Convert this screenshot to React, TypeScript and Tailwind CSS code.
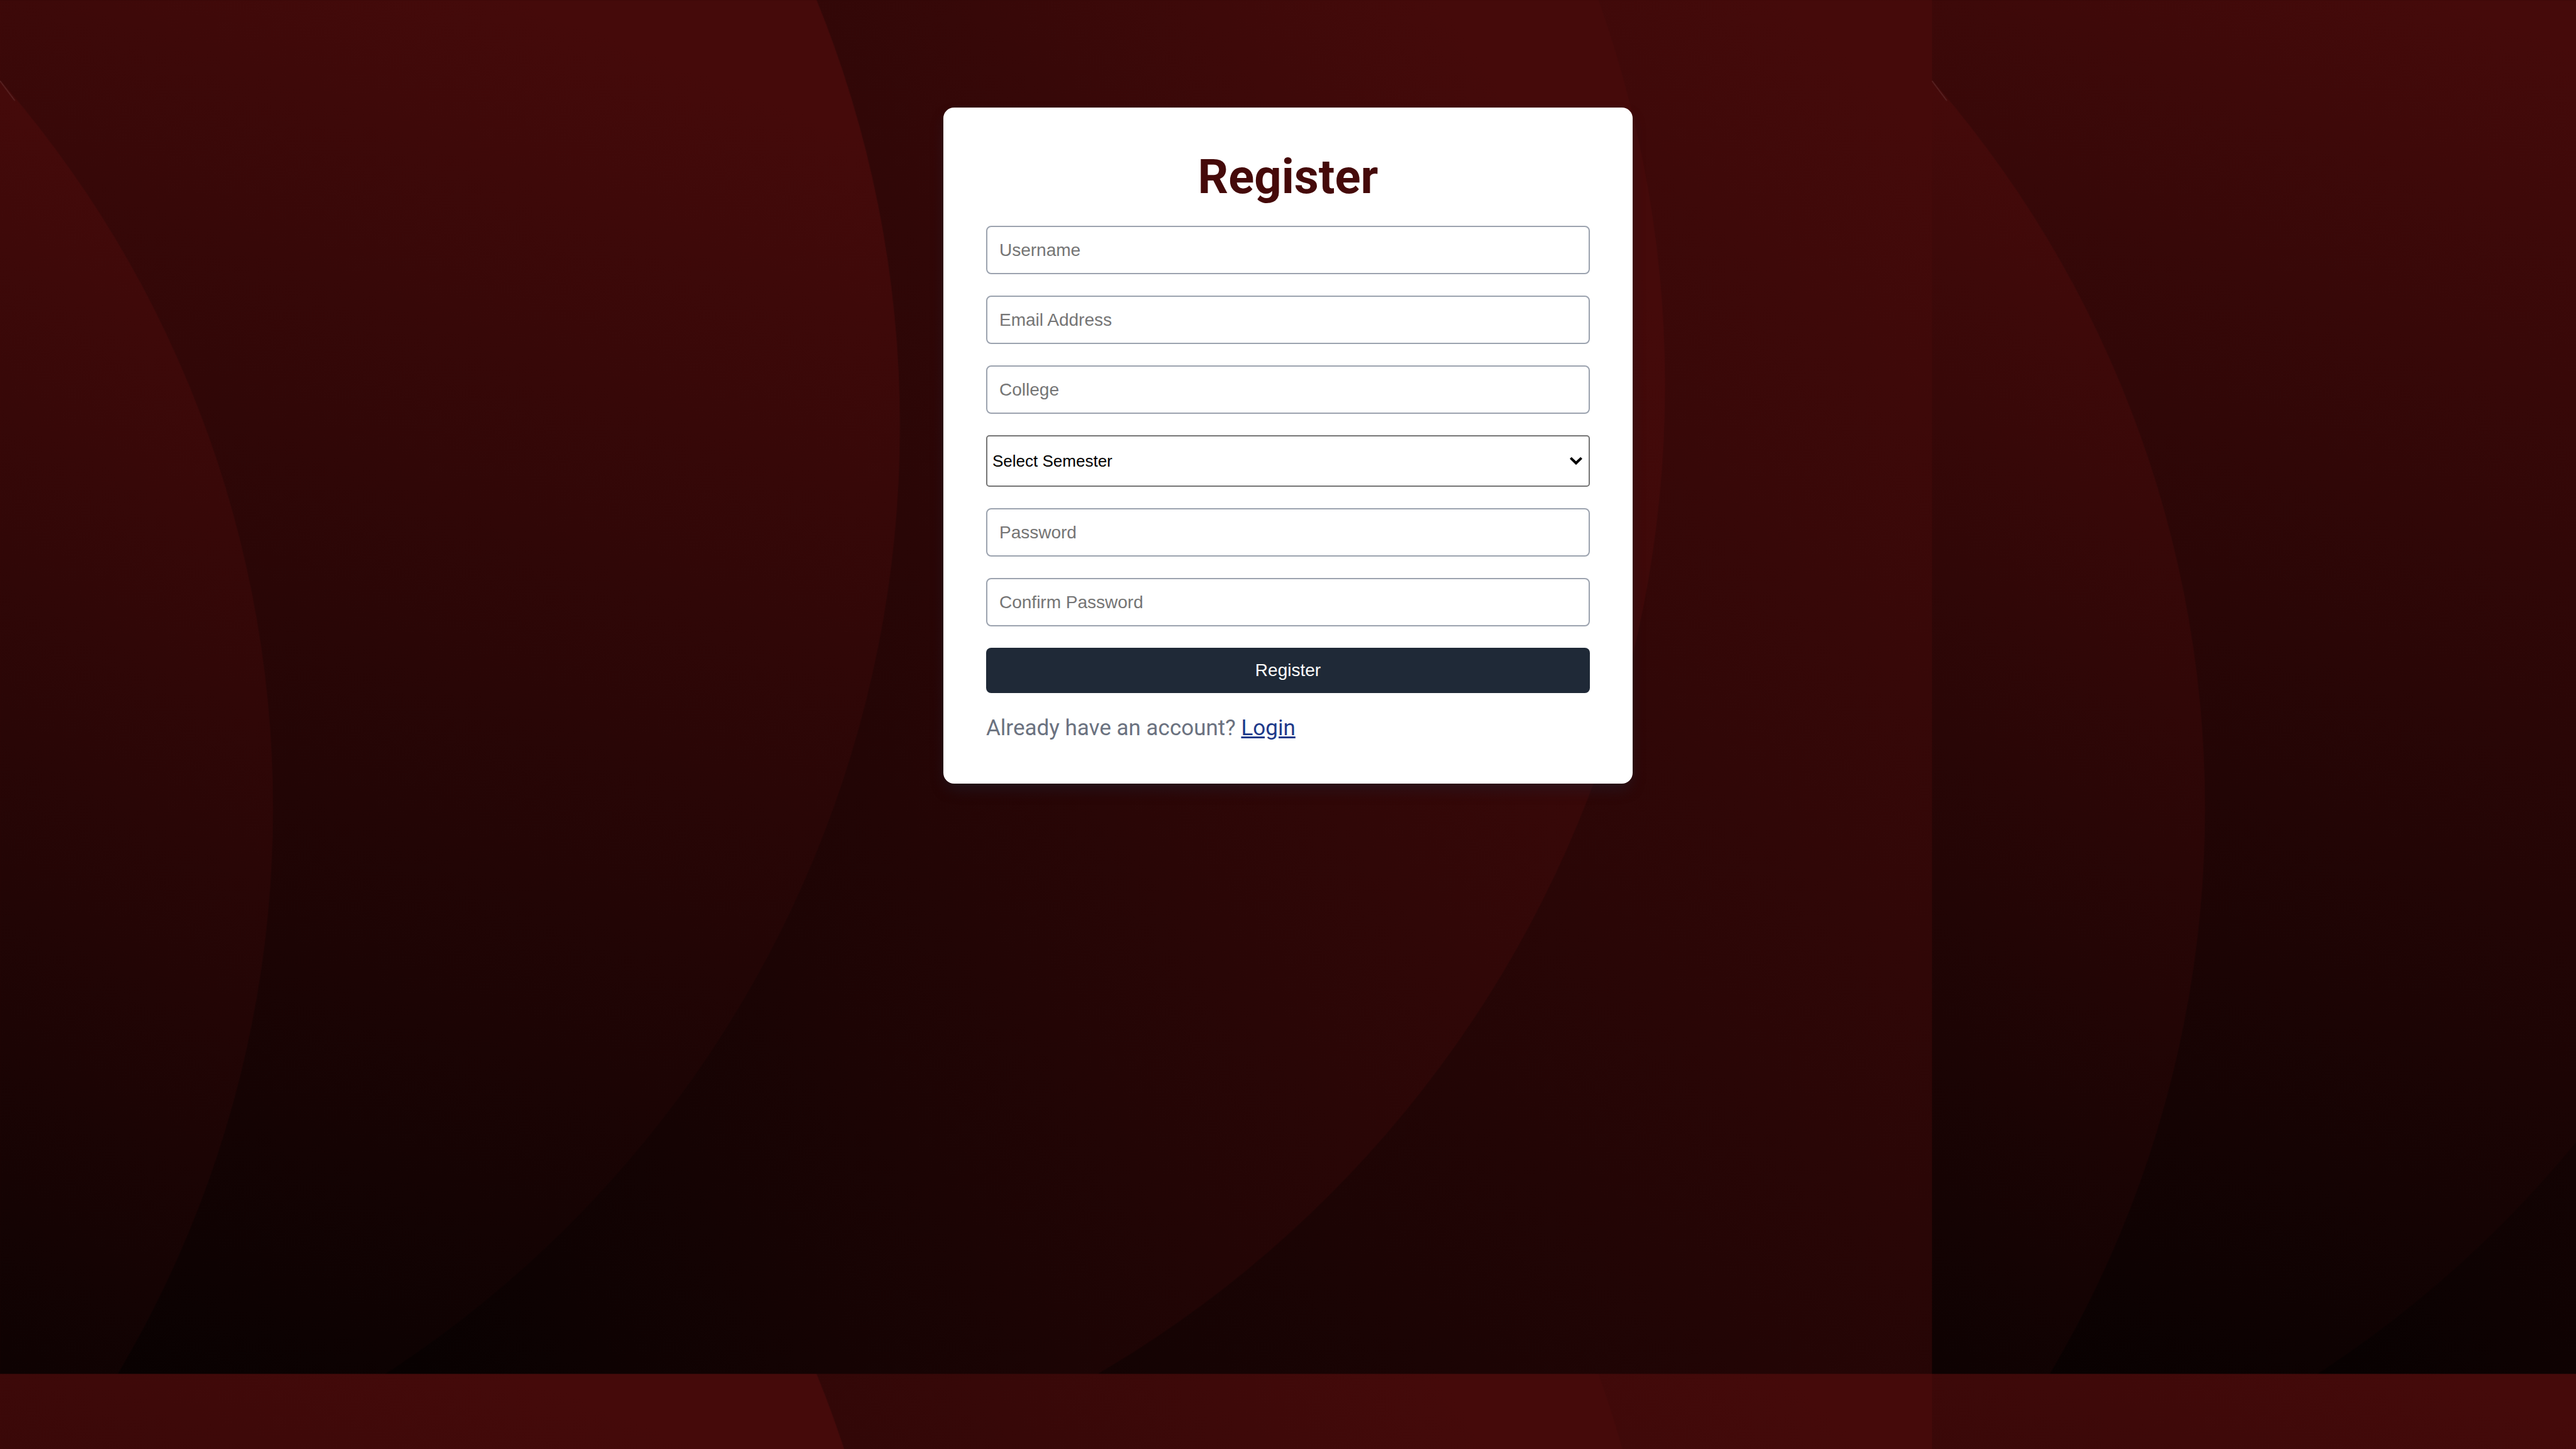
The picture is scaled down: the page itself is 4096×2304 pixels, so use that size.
const fields = [
  { id: "username", type: "text", label: "Username" },
  { id: "email", type: "email", label: "Email Address" },
  { id: "college", type: "text", label: "College" },
];

const secrets = [
  { id: "password", label: "Password" },
  { id: "confirm", label: "Confirm Password" },
];

// Repeating artwork: three large discs over a diagonal maroon gradient.
function Backdrop() {
  return (
    <svg
      className="absolute inset-0 h-full w-full"
      viewBox="0 0 7680 4320"
      preserveAspectRatio="xMinYMin slice"
      aria-hidden="true"
    >
      <defs>
        <linearGradient id="g0" gradientUnits="userSpaceOnUse" x1="5650" y1="300" x2="1500" y2="4710">
          <stop offset="0" stopColor="#450a0a" />
          <stop offset="1" stopColor="#000" />
        </linearGradient>
        <linearGradient id="g1" gradientUnits="userSpaceOnUse" x1="4260" y1="-40" x2="-190" y2="3230">
          <stop offset="0" stopColor="#450a0a" />
          <stop offset="1" stopColor="#000" />
        </linearGradient>
        <linearGradient id="g2" gradientUnits="userSpaceOnUse" x1="1560" y1="0" x2="-254" y2="4485">
          <stop offset="0" stopColor="#450a0a" />
          <stop offset="1" stopColor="#000" />
        </linearGradient>
        <linearGradient id="g3" gradientUnits="userSpaceOnUse" x1="0" y1="240" x2="-2070" y2="3845">
          <stop offset="0" stopColor="#450a0a" />
          <stop offset="1" stopColor="#000" />
        </linearGradient>
        <pattern id="tile" patternUnits="userSpaceOnUse" width="5760" height="4096">
          <rect width="5760" height="4096" fill="url(#g0)" />
          <circle cx="1549" cy="1148" r="3415" fill="url(#g1)" />
          <circle cx="-687" cy="1270" r="3370" fill="url(#g2)" />
          <circle cx="-2489" cy="2410" r="3303" fill="url(#g3)" />
          <path d="M0 241L44 300" stroke="#fff" strokeOpacity="0.2" strokeWidth="2" />
        </pattern>
      </defs>
      <rect width="7680" height="4320" fill="url(#tile)" />
    </svg>
  );
}

const inputClass =
  "block w-full rounded-[8px] border-2 border-[#9ca3af] bg-white px-[19px] pt-[21px] pb-[20px] text-[28px] leading-[32px] text-black placeholder:text-[#757575]";

export default function App() {
  return (
    <div className="relative min-h-screen w-full overflow-hidden bg-[#1a0303] font-['Roboto',sans-serif]">
      <Backdrop />
      <main className="relative flex justify-center pt-[171px]">
        <div className="w-full max-w-[1096px] rounded-[17px] bg-white px-[68px] pt-[68px] pb-[68px] shadow-[0_12px_24px_-5px_rgba(31,41,59,0.45)]">
          <h1 className="mb-[35px] text-center text-[76px] leading-[85px] font-bold text-[#450a0a]">Register</h1>
          <form
            className="flex flex-col gap-[34px] font-['Liberation_Sans',sans-serif]"
            onSubmit={(e) => e.preventDefault()}
          >
            {fields.map((f) => (
              <input key={f.id} id={f.id} type={f.type} aria-label={f.label} placeholder={f.label} className={inputClass} />
            ))}
            <div className="relative">
              <select
                aria-label="Select Semester"
                className="block h-[82px] w-full appearance-none rounded-[5px] border-2 border-[#757575] bg-white px-[8px] text-[26px] text-black"
              >
                <option>Select Semester</option>
                <option>Semester 1</option>
                <option>Semester 2</option>
              </select>
              <svg
                className="pointer-events-none absolute top-1/2 right-[12px] h-[13px] w-[20px] -translate-y-1/2"
                viewBox="0 0 20 13"
                fill="#000"
                aria-hidden="true"
              >
                <path d="M0 3L2.800 0.200L10 6.900L17.200 0.200L20 3L10 12.800Z" />
              </svg>
            </div>
            {secrets.map((f) => (
              <input
                key={f.id}
                id={f.id}
                type="password"
                aria-label={f.label}
                placeholder={f.label}
                className={inputClass}
              />
            ))}
            <button type="submit" className="w-full rounded-[8px] bg-[#1f2937] py-[20px] text-[28px] leading-[32px] text-white">
              Register
            </button>
          </form>
          <p className="mt-[36px] text-[35px] leading-[40px] text-[#6b7280]">
            Already have an account?{" "}
            <a href="#login" className="text-[#1e3a8a] underline">
              Login
            </a>
          </p>
        </div>
      </main>
    </div>
  );
}
